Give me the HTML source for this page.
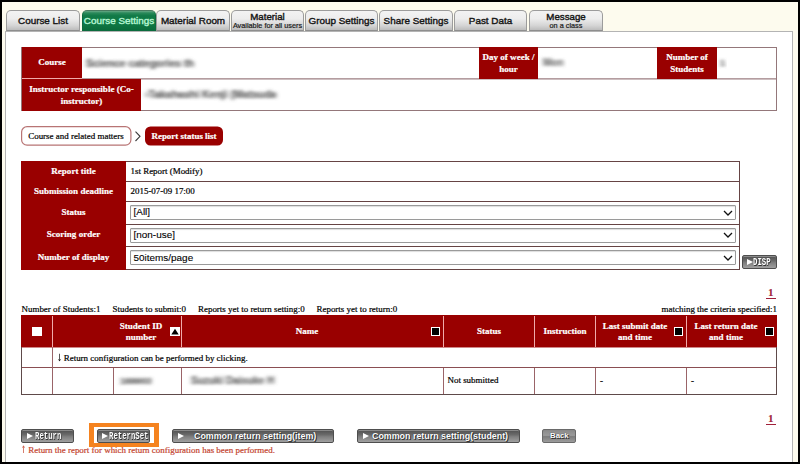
<!DOCTYPE html>
<html>
<head>
<meta charset="utf-8">
<title>Report status list</title>
<style>
html,body{margin:0;padding:0;}
body{width:800px;height:464px;background:#000;position:relative;overflow:hidden;font-family:"Liberation Serif",serif;font-size:8.95px;color:#000;-webkit-text-stroke-width:0.2px;}
.abs{position:absolute;}
#bg0{left:2px;top:2px;width:796px;height:460px;background:#fdfbee;}
#bg{left:2px;top:2px;width:796px;height:460px;background:#fdfbee;}
#panel{left:5px;top:31px;width:788px;height:431px;background:#fff;border:1px solid #b4b4b4;border-bottom:none;box-sizing:border-box;}
.tab{position:absolute;top:10px;height:21px;width:74px;box-sizing:border-box;border:1px solid #9c9c9c;border-bottom:1px solid #8e8e8e;border-radius:5px 5px 0 0;background:linear-gradient(#f3f3f3 0%,#ededed 40%,#d6d6d6 75%,#bcbcbc 100%);font-family:"Liberation Sans",sans-serif;font-size:9.9px;color:#151515;-webkit-text-stroke:0.4px #151515;text-align:center;line-height:19px;white-space:nowrap;}
.tab.on{background:linear-gradient(#6aa988 0%,#2b8a5b 10%,#117a47 25%,#0f7744 70%,#0a6b3b 100%);color:#b4f5d2;-webkit-text-stroke:0.4px #b4f5d2;border-color:#4a7a60 #0b6b3e #0b6b3e #0b6b3e;}
.tab.two{line-height:10px;}
.tab.two b{display:block;font-size:9.7px;font-weight:normal;line-height:10px;margin-top:0.5px;}
.tab.two span{display:block;font-size:7.3px;line-height:7px;margin-top:0.5px;-webkit-text-stroke:0.2px #222;}
.hd{position:absolute;background:#990000;color:#fff;font-weight:bold;font-size:9.02px;text-align:center;box-sizing:border-box;}
.box{position:absolute;box-sizing:border-box;border:1px solid #a66;}
.ln{position:absolute;background:#a86868;}
.lw{position:absolute;background:#f0aaaa;}
.blur{position:absolute;color:#585858;filter:url(#bl);white-space:nowrap;overflow:hidden;font-weight:bold;font-size:10.5px;line-height:12px;height:12px;font-family:"Liberation Sans",sans-serif;}
.sel{-webkit-text-stroke-width:0.1px;position:absolute;box-sizing:border-box;border:1px solid #9a9a9a;background:#fff;font-family:"Liberation Sans",sans-serif;font-size:9.95px;line-height:12.5px;padding-left:2.5px;border-radius:1px;box-shadow:inset 0 1px 1px #ddd;}
.btn{-webkit-text-stroke-width:0;position:absolute;box-sizing:border-box;top:429px;height:14px;border:1px solid #4e4e4e;border-radius:2px;background:linear-gradient(#505050 0%,#6a6a6a 40%,#7e7e7e 55%,#a0a0a0 100%);color:#fff;font-family:"Liberation Sans",sans-serif;font-size:8.9px;font-weight:bold;line-height:12px;white-space:nowrap;text-shadow:0 0 1px #222,1px 1px 0 #333;box-shadow:inset 0 1px 0 #8a8a8a;}
.btn i{position:absolute;top:2.5px;width:0;height:0;border-left:6px solid #fff;border-top:3.5px solid transparent;border-bottom:3.5px solid transparent;}
.btn span{position:absolute;top:0;}
.btn .m{font-family:"Liberation Mono",monospace;font-size:10.6px;display:inline-block;transform:scaleX(0.69);transform-origin:0 0;}
.t{position:absolute;white-space:nowrap;}
.ar{display:inline-block;font-family:"DejaVu Serif",serif;font-size:9.8px;line-height:9px;transform:scaleX(0.7);transform-origin:50% 50%;width:5px;text-indent:-1.9px;vertical-align:0.3px;}
.w{color:#fff;font-weight:bold;text-align:center;font-size:9.02px;}
.pg{color:#a0203a;font-weight:bold;font-size:10.2px;line-height:10px;padding:0 2.3px 0 2.3px;border-bottom:1px solid #a0203a;}
</style>
</head>
<body>
<svg width="0" height="0" style="position:absolute"><defs><filter id="bl" x="-20%" y="-60%" width="140%" height="220%"><feGaussianBlur stdDeviation="2 1.5"/></filter></defs></svg>
<div id="bg0" class="abs"></div>
<div id="bg" class="abs"></div>
<div id="panel" class="abs"></div>

<!-- tabs -->
<div class="tab" style="left:6px;">Course List</div>
<div class="tab on" style="left:82px;">Course Settings</div>
<div class="tab" style="left:156px;">Material Room</div>
<div class="tab two" style="left:231px;width:73px;"><b>Material</b><span>Available for all users</span></div>
<div class="tab" style="left:305px;width:73px;">Group Settings</div>
<div class="tab" style="left:379px;">Share Settings</div>
<div class="tab" style="left:454px;width:73px;">Past Data</div>
<div class="tab two" style="left:529px;width:74px;"><b>Message</b><span>on a class</span></div>

<!-- course info -->
<div class="box" style="left:21px;top:47px;width:756px;height:64px;border-color:#94777a;"></div>
<div class="ln" style="left:22px;top:78px;width:754px;height:1px;background:#b49da0;"></div>
<div class="ln" style="left:22px;top:79px;width:754px;height:1px;background:#cdbec0;"></div>
<div class="hd" style="left:22px;top:47px;width:60px;height:31px;line-height:31px;">Course</div>
<div class="hd" style="left:479px;top:47px;width:59px;height:32px;line-height:11.6px;padding-top:5px;">Day of week /<br>hour</div>
<div class="hd" style="left:657px;top:47px;width:60px;height:32px;line-height:11.6px;padding-top:5px;">Number of<br>Students</div>
<div class="hd" style="left:22px;top:79px;width:119px;height:32px;line-height:11.6px;padding-top:5px;">Instructor responsible (Co-<br>instructor)</div>
<div class="lw" style="left:22px;top:78px;width:60px;height:1px;"></div>
<div class="blur" style="left:86px;top:56.5px;width:108px;">Science categories theories</div>
<div class="blur" style="left:543px;top:56.5px;width:20px;font-size:10px;color:#6a6a6a;">Mon2</div>
<div class="blur" style="left:720px;top:56.5px;font-size:9px;">1</div>
<div class="blur" style="left:145px;top:88px;width:131px;">&rsaquo;Takahashi Kenji (Matsuda N)</div>

<!-- breadcrumb -->
<svg class="abs" style="left:0;top:120px;" width="240" height="32"><rect x="21.6" y="6.6" width="109.3" height="18.6" rx="5.5" fill="#fff" stroke="#b87474" stroke-width="1.2"/><rect x="145" y="6.5" width="78" height="19" rx="5.5" fill="#990000"/><path d="M135.5 11.6 L140 16.3 L135.5 21" fill="none" stroke="#3a3a3a" stroke-width="1.1"/></svg>
<div class="abs" style="left:21px;top:126px;width:110px;height:20px;text-align:center;line-height:20px;">Course and related matters</div>
<div class="abs" style="left:145px;top:126px;width:78px;height:20px;color:#fff;font-weight:bold;text-align:center;line-height:20px;">Report status list</div>

<!-- form table -->
<div class="box" style="left:21px;top:161px;width:719px;height:109px;border-color:#664444;"></div>
<div class="hd" style="left:21px;top:161px;width:105px;height:109px;"></div>
<div class="ln" style="left:126px;top:181px;width:613px;height:1px;background:#664444;"></div>
<div class="ln" style="left:126px;top:201px;width:613px;height:1px;background:#664444;"></div>
<div class="ln" style="left:126px;top:224px;width:613px;height:1px;background:#664444;"></div>
<div class="ln" style="left:126px;top:246px;width:613px;height:1px;background:#664444;"></div>
<div class="t w" style="left:21px;top:166px;width:105px;">Report title</div>
<div class="t w" style="left:21px;top:186px;width:105px;">Submission deadline</div>
<div class="t w" style="left:21px;top:207px;width:105px;">Status</div>
<div class="t w" style="left:21px;top:229px;width:105px;">Scoring order</div>
<div class="t w" style="left:21px;top:252px;width:105px;">Number of display</div>
<div class="t" style="left:130.5px;top:166px;">1st Report (Modify)</div>
<div class="t" style="left:130.5px;top:186px;">2015-07-09 17:00</div>
<div class="sel" style="left:130px;top:205px;width:606px;height:15px;">[All]</div>
<div class="sel" style="left:130px;top:228px;width:606px;height:15px;">[non-use]</div>
<div class="sel" style="left:130px;top:250px;width:606px;height:15px;padding-top:0.5px;">50items/page</div>
<svg class="abs" style="left:723px;top:209.5px;" width="10" height="7"><path d="M1 1 L5 5 L9 1" fill="none" stroke="#111" stroke-width="1.3"/></svg>
<svg class="abs" style="left:723px;top:232px;" width="10" height="7"><path d="M1 1 L5 5 L9 1" fill="none" stroke="#111" stroke-width="1.3"/></svg>
<svg class="abs" style="left:723px;top:254.5px;" width="10" height="7"><path d="M1 1 L5 5 L9 1" fill="none" stroke="#111" stroke-width="1.3"/></svg>
<div class="btn" style="left:742px;top:255px;width:35px;"><i style="left:4px;"></i><span class="m" style="left:10px;">DISP</span></div>

<!-- pager + stats -->
<div class="t pg" style="left:766px;top:287.5px;">1</div>
<div class="t" style="left:21.5px;top:304px;">Number of Students:1</div>
<div class="t" style="left:112.5px;top:304px;">Students to submit:0</div>
<div class="t" style="left:198px;top:304px;">Reports yet to return setting:0</div>
<div class="t" style="left:316.5px;top:304px;">Reports yet to return:0</div>
<div class="t" style="right:23px;top:304px;">matching the criteria specified:1</div>

<!-- main table -->
<div class="box" style="left:21px;top:315px;width:756px;height:80px;border-color:#5e4a4a;"></div>
<div class="hd" style="left:21px;top:315px;width:756px;height:32px;"></div>
<div class="abs" style="left:22px;top:347px;width:754px;height:1px;background:#d08888;"></div>
<div class="ln" style="left:22px;top:367px;width:754px;height:1px;background:#8a4e52;"></div>
<div class="ln" style="left:52px;top:347px;width:1px;height:47px;background:#9a6468;"></div>
<div class="ln" style="left:113px;top:368px;width:1px;height:26px;background:#9a6468;"></div>
<div class="ln" style="left:181px;top:368px;width:1px;height:26px;background:#9a6468;"></div>
<div class="ln" style="left:443px;top:368px;width:1px;height:26px;background:#9a6468;"></div>
<div class="ln" style="left:534px;top:368px;width:1px;height:26px;background:#9a6468;"></div>
<div class="ln" style="left:595px;top:368px;width:1px;height:26px;background:#9a6468;"></div>
<div class="ln" style="left:686px;top:368px;width:1px;height:26px;background:#9a6468;"></div>
<div class="lw" style="left:52px;top:316px;width:1px;height:31px;"></div>
<div class="lw" style="left:181px;top:316px;width:1px;height:31px;"></div>
<div class="lw" style="left:443px;top:316px;width:1px;height:31px;"></div>
<div class="lw" style="left:534px;top:316px;width:1px;height:31px;"></div>
<div class="lw" style="left:595px;top:316px;width:1px;height:31px;"></div>
<div class="lw" style="left:686px;top:316px;width:1px;height:31px;"></div>

<div class="abs" style="left:32px;top:327px;width:10px;height:9px;background:#fff;"></div>
<div class="t w" style="left:110px;top:320.5px;width:62px;line-height:11.4px;white-space:normal;">Student ID number</div>
<div class="abs" style="left:170px;top:327px;width:10px;height:9px;background:#fff;"></div>
<svg class="abs" style="left:171px;top:328px;" width="8" height="7"><path d="M4 0.7 L7.7 6.5 L0.3 6.5 Z" fill="#000"/></svg>
<div class="t w" style="left:182px;top:326px;width:250px;">Name</div>
<div class="abs" style="left:431px;top:327px;width:9px;height:9px;box-sizing:border-box;background:#000;border:1px solid #fff;"></div>
<div class="t w" style="left:444px;top:326px;width:90px;">Status</div>
<div class="t w" style="left:535px;top:326px;width:60px;">Instruction</div>
<div class="t w" style="left:596px;top:320.5px;width:78px;line-height:11.4px;white-space:normal;">Last submit date and time</div>
<div class="abs" style="left:674px;top:327px;width:9px;height:9px;box-sizing:border-box;background:#000;border:1px solid #fff;"></div>
<div class="t w" style="left:687px;top:320.5px;width:78px;line-height:11.4px;white-space:normal;">Last return date and time</div>
<div class="abs" style="left:765px;top:327px;width:9px;height:9px;box-sizing:border-box;background:#000;border:1px solid #fff;"></div>

<div class="t" style="left:56.5px;top:352.5px;"><span class="ar">&#8595;</span> Return configuration can be performed by clicking.</div>
<div class="blur" style="left:120px;top:374.5px;width:31px;font-size:9.5px;color:#555;">16990364</div>
<div class="blur" style="left:191px;top:374.5px;width:83px;font-size:10px;color:#606060;">Suzuki Daisuke Hiro</div>
<div class="t" style="left:447.5px;top:375px;">Not submitted</div>
<div class="t" style="left:600px;top:376px;">-</div>
<div class="t" style="left:691px;top:376px;">-</div>

<div class="t pg" style="left:766px;top:414px;">1</div>

<!-- buttons -->
<div class="abs" style="left:89px;top:423px;width:70px;height:24px;box-sizing:border-box;border:4px solid #f5831f;border-left-width:5px;border-right-width:5px;"></div>
<div class="btn" style="left:21px;width:53px;"><i style="left:5px;"></i><span class="m" style="left:12.5px;">Return</span></div>
<div class="btn" style="left:97px;width:53px;"><i style="left:4px;"></i><span class="m" style="left:10.5px;">ReternSet</span></div>
<div class="btn" style="left:172px;width:162px;"><i style="left:5px;"></i><span style="left:21px;">Common return setting(item)</span></div>
<div class="btn" style="left:357px;width:163px;"><i style="left:5px;"></i><span style="left:14px;">Common return setting(student)</span></div>
<div class="btn" style="left:542px;width:34px;background:linear-gradient(#8a8a8a 0%,#9a9a9a 45%,#7c7c7c 55%,#9c9c9c 100%);border-color:#6a6a6a;"><span style="left:7px;font-size:7.8px;">Back</span></div>
<div class="t" style="left:21px;top:445.3px;color:#c4452f;"><span class="ar">&#8593;</span> Return the report for which return configuration has been performed.</div>
</body>
</html>
